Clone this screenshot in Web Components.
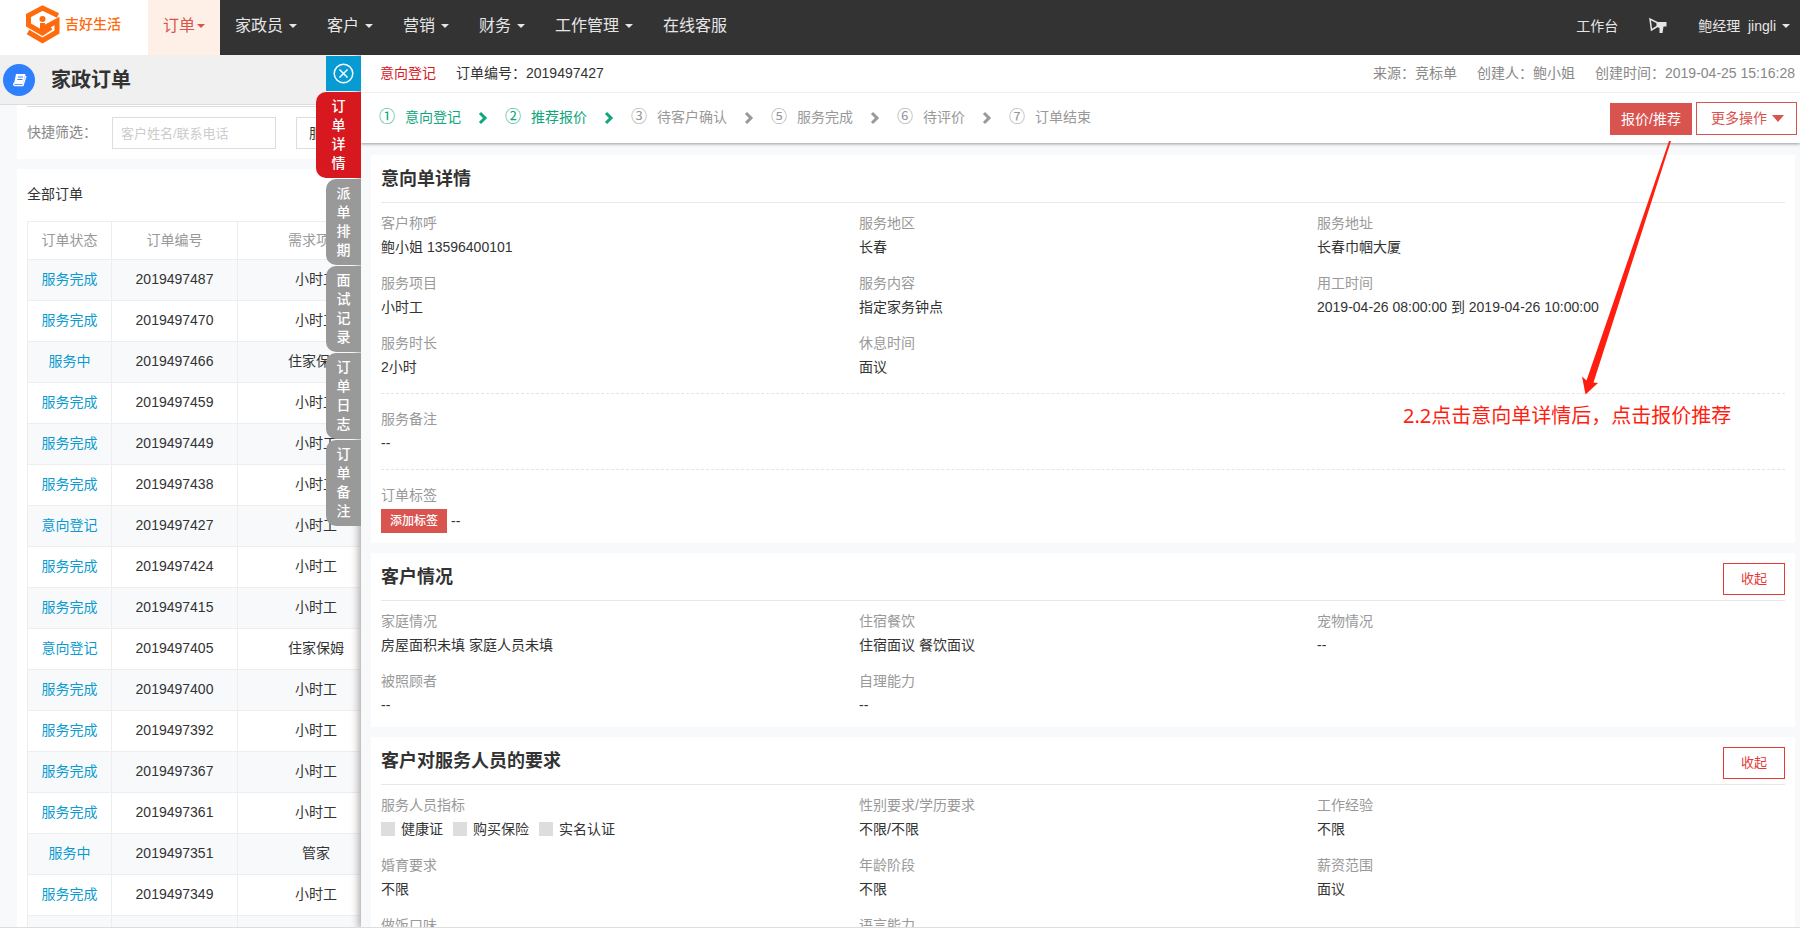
<!DOCTYPE html>
<html lang="zh-CN">
<head>
<meta charset="utf-8">
<title>家政订单</title>
<style>
html, body { margin: 0; height: 100%; }
body { font: 14px/24px "Liberation Sans", "Noto Sans CJK SC", sans-serif; color: #333; background: #fff; overflow: hidden; }
</style>
</head>
<body>
<order-app></order-app>
<script>
const define = (name, html, setup) => {
  const template = document.createElement('template');
  template.innerHTML = html;
  customElements.define(name, class extends HTMLElement {
    constructor() {
      super();
      this.attachShadow({ mode: 'open' }).append(template.content.cloneNode(true));
    }
    connectedCallback() { if (setup) setup(this, this.shadowRoot); }
  });
};

define('nav-item', `
<style>
:host { display: block; font-size: 16px; }
a { display: flex; align-items: center; gap: 6px; height: 100%; box-sizing: border-box; padding: 0 15px 4px; color: #e6e6e6; text-decoration: none; white-space: nowrap; }
i { display: none; border: 4px solid transparent; border-top-color: currentColor; border-bottom: 0; }
:host([menu]) i { display: block; }
:host([active]) a { background: #fef0e6; color: #d9534f; gap: 2px; }
:host([small]) { font-size: 14px; }
</style>
<a href="#"><slot></slot><i></i></a>`);

define('app-nav', `
<style>
:host { display: flex; height: 55px; flex: none; background: #333; }
.logo { display: flex; align-items: center; gap: 4px; width: 148px; box-sizing: border-box; padding: 0 0 6px 25px; background: #fff; color: #ff6a0d; font-weight: 500; text-decoration: none; }
nav { display: flex; }
nav.user { margin-left: auto; margin-right: -5px; }
.logo span { padding-bottom: 2px; }
</style>
<a class="logo" href="#">
<svg width="36" height="40" viewBox="0 0 36 40"><g fill="none" stroke="#ff6a0d" stroke-width="5" stroke-linejoin="miter"><path d="M33 10.5 17.5 3 3.500 10.500V20L17.500 28 26 22.500"/><path d="M3 27 17.500 35.500 32 27V16L19 23"/></g><circle cx="17.500" cy="14" r="3" fill="#ff6a0d"/><path d="M15 18h5v11h-5z" fill="#ff6a0d"/></svg>
<span>吉好生活</span></a>
<nav>
<nav-item active menu>订单</nav-item><nav-item menu>家政员</nav-item><nav-item menu>客户</nav-item><nav-item menu>营销</nav-item><nav-item menu>财务</nav-item><nav-item menu>工作管理</nav-item><nav-item>在线客服</nav-item>
</nav>
<nav class="user">
<nav-item small>工作台</nav-item>
<nav-item small><svg width="20" height="20" viewBox="0 0 20 20"><path d="M2 3 3.500 14 10 10V7z" fill="none" stroke="#e6e6e6" stroke-width="1.500"/><path d="M8.500 6H18.500V10.500H15.500L14.500 17H11.500V12L8.500 10.500z" fill="#e6e6e6"/></svg></nav-item>
<nav-item small menu>鲍经理&nbsp; jingli</nav-item>
</nav>`);

define('order-list', `
<style>
:host { display: flex; flex-direction: column; width: 361px; flex: none; overflow: hidden; background: #f7f9fb; }
header { display: flex; align-items: center; gap: 16px; height: 49px; flex: none; padding-left: 3px; background: #f0f0f0; border-bottom: 1px solid #ddd; }
.badge { display: flex; align-items: center; justify-content: center; width: 32px; height: 32px; border-radius: 50%; background: #2f80ff; }
h1 { margin: 0; font-size: 20px; line-height: 24px; }
section { width: 378px; margin-left: 17px; padding-left: 10px; background: #fff; box-sizing: border-box; flex: none; }
.filter { margin-bottom: 10px; padding-top: 1px; }
.filter div { display: flex; align-items: center; border-top: 1px solid #ddd; padding: 10px 0; }
label { width: 85px; color: #888; padding-bottom: 2px; }
input { width: 164px; height: 32px; box-sizing: border-box; margin-right: 20px; padding: 0 8px; border: 1px solid #ddd; font: inherit; font-size: 13px; color: #333; flex: none; }
input::placeholder { color: #ccc; }
.btn { height: 32px; width: 80px; flex: none; border: 1px solid #ddd; background: #fff; font: inherit; color: #333; text-align: left; padding: 0 12px; }
h2 { margin: 0; padding: 13px 0 15px; font-size: 14px; line-height: 24px; font-weight: 400; }
table { width: 368px; table-layout: fixed; border-collapse: collapse; text-align: center; }
th, td { border: 1px solid #eee; padding: 0 0 2px; height: 38px; font-weight: 400; }
th { height: 35px; color: #999; }
tbody tr:nth-child(odd) { background: #f7f9fb; }
a { color: #0a9bd0; text-decoration: none; }
.c1 { width: 84px; } .c2 { width: 126px; }
</style>
<header><span class="badge"><svg width="15" height="14" viewBox="0 0 15 14"><path d="M4 1h9.500L11 11H2z" fill="#fff"/><path d="M6 4h5M5.500 6.500h5" stroke="#2f80ff"/><path d="M2.500 9.500Q.5 12.500 3 12.500h8L14 3" fill="none" stroke="#fff" stroke-width="1.300"/></svg></span><h1>家政订单</h1></header>
<section class="filter"><div><label for="q">快捷筛选：</label><input id="q" placeholder="客户姓名/联系电话"><button class="btn">服务</button></div></section>
<section><h2>全部订单</h2>
<table><colgroup><col class="c1"><col class="c2"><col></colgroup><thead><tr><th>订单状态</th><th>订单编号</th><th>需求项目</th></tr></thead><tbody></tbody></table></section>`,
(host, root) => {
  const rows = [['服务完成', 487], ['服务完成', 470], ['服务中', 466, '住家保姆'], ['服务完成', 459], ['服务完成', 449], ['服务完成', 438], ['意向登记', 427], ['服务完成', 424], ['服务完成', 415], ['意向登记', 405, '住家保姆'], ['服务完成', 400], ['服务完成', 392], ['服务完成', 367], ['服务完成', 361], ['服务中', 351, '管家'], ['服务完成', 349]];
  root.querySelector('tbody').innerHTML = rows.map(([state, id, job = '小时工']) =>
    `<tr><td><a href="#">${state}</a></td><td>2019497${id}</td><td>${job}</td></tr>`).join('') + '<tr><td></td><td></td><td></td></tr>';
});

define('side-tab', `
<style>
:host { display: block; width: 35px; }
:host([active]) { width: 45px; }
button { display: flex; justify-content: center; width: 100%; padding: 5px 0; border: 0; border-radius: 10px 0 0 10px; background: #999; color: #fff; font: inherit; font-weight: 500; line-height: 19px; }
:host([active]) button { background: #d7181f; }
span { width: 14px; word-break: break-all; }
</style>
<button><span><slot></slot></span></button>`);

define('order-step', `
<style>
:host { display: flex; align-items: center; color: #999; white-space: nowrap; }
:host([done]) { color: #0fa67c; }
b { width: 16px; margin-right: 10px; font-size: 16px; font-weight: 400; }
svg { margin: 2px 17px 0; }
:host(:last-of-type) svg { display: none; }
</style>
<b></b><slot></slot><svg width="10" height="14" viewBox="0 0 10 14"><path d="M2 2 7 7 2 12" fill="none" stroke="currentColor" stroke-width="3"/></svg>`,
(host, root) => { root.querySelector('b').textContent = host.getAttribute('mark'); });

define('info-field', `
<style>
:host { display: block; }
div { color: #999; }
p { margin: 0; min-height: 24px; }
</style>
<div></div><p><slot></slot></p>`,
(host, root) => { root.querySelector('div').textContent = host.getAttribute('label'); });

define('info-card', `
<style>
:host { display: block; margin: 0 5px 10px 10px; padding: 0 10px 10px; background: #fff; }
header { display: flex; align-items: center; justify-content: space-between; height: 47px; border-bottom: 1px solid #e8e8e8; }
h2 { margin: 0; font-size: 18px; line-height: 26px; }
button { display: none; align-self: flex-start; width: 62px; height: 32px; margin-top: 10px; border: 1px solid #e53935; background: #fff; color: #e53935; font: inherit; font-size: 13px; padding: 0; }
:host([foldable]) button { display: block; }
.grid { display: grid; grid-template-columns: 478fr 458fr 468fr; row-gap: 12px; padding-top: 8px; }
</style>
<header><h2></h2><button>收起</button></header>
<div class="grid"><slot></slot></div>
<slot name="more"></slot>`,
(host, root) => { root.querySelector('h2').textContent = host.getAttribute('heading'); });

define('quality-check', `
<style>
:host { display: inline-block; vertical-align: top; margin-right: 10px; }
label { display: flex; align-items: center; gap: 6px; }
input { appearance: none; width: 14px; height: 14px; margin: 0; background: #ddd; }
</style>
<label><input type="checkbox" disabled><slot></slot></label>`);

define('callout-note', `
<style>
:host { display: block; position: absolute; top: 86px; right: 68px; width: 329px; pointer-events: none; color: #ff1e10; font: 20px/30px "Noto Sans", "Noto Sans CJK SC", sans-serif; white-space: nowrap; }
svg { display: block; margin: 0 0 6px 178px; }
</style>
<svg width="92" height="254" viewBox="0 0 92 254"><path d="M88 0h2L12.500 241.500 17 242 4.500 253.500 1 235.500 5.500 239.500z" fill="#ff1e10"/></svg>
<div>2.2点击意向单详情后，点击报价推荐</div>`);

define('order-drawer', `
<style>
:host { display: flex; flex-direction: column; flex: 1; min-width: 0; position: relative; background: #f7f9fb; box-shadow: 0 0 8px 2px #a8a0a0; }
.tabs { position: absolute; top: 1px; right: 100%; display: flex; flex-direction: column; align-items: flex-end; gap: 1px; }
.close { display: flex; align-items: center; justify-content: center; width: 35px; height: 35px; padding: 0; border: 0; background: #069bd2; }
.top { background: #fff; box-shadow: 0 1px 3px #999; position: relative; flex: none; }
.meta { display: flex; gap: 20px; height: 35px; align-items: center; padding: 0 5px 2px 19px; border-bottom: 1px solid #f0f0f0; white-space: nowrap; }
.meta em { font-style: normal; color: #d7181f; }
.meta span { color: #888; }
.meta .from { margin-left: auto; }
.steps { display: flex; align-items: center; height: 48px; padding: 0 3px 2px 18px; }
.ops { display: flex; align-items: flex-end; gap: 4px; margin-left: auto; padding-top: 2px; }
.ops button { height: 32px; border: 1px solid #d9534f; background: #d9534f; color: #fff; font: inherit; padding: 0 10px; white-space: nowrap; }
.ops .more { display: flex; align-items: center; gap: 5px; height: 33px; padding: 0 12px 0 14px; background: #fff; color: #d9534f; }
.more i { border: 6px solid transparent; border-top: 7px solid currentColor; border-bottom: 0; }
.body { flex: 1; min-height: 0; overflow: hidden; padding-top: 12px; }
.part { margin-top: 14px; padding-top: 13px; border-top: 1px dashed #e4e4e4; }
.tags { display: flex; align-items: center; gap: 4px; padding-top: 2px; }
.tags button { width: 66px; height: 24px; padding: 0; border: 0; background: #d9534f; color: #fff; font: inherit; font-size: 12px; font-weight: 500; }
</style>
<div class="top">
<div class="meta"><em>意向登记</em><div>订单编号：2019497427</div><span class="from">来源：竞标单</span><span>创建人：鲍小姐</span><span>创建时间：2019-04-25 15:16:28</span></div>
<div class="steps">
<order-step done mark="①">意向登记</order-step><order-step done mark="②">推荐报价</order-step><order-step mark="③">待客户确认</order-step><order-step mark="⑤">服务完成</order-step><order-step mark="⑥">待评价</order-step><order-step mark="⑦">订单结束</order-step>
<div class="ops"><button>报价/推荐</button><button class="more">更多操作<i></i></button></div>
</div>
</div>
<div class="body">
<info-card heading="意向单详情">
<info-field label="客户称呼">鲍小姐 13596400101</info-field><info-field label="服务地区">长春</info-field><info-field label="服务地址">长春巾帼大厦</info-field>
<info-field label="服务项目">小时工</info-field><info-field label="服务内容">指定家务钟点</info-field><info-field label="用工时间">2019-04-26 08:00:00 到 2019-04-26 10:00:00</info-field>
<info-field label="服务时长">2小时</info-field><info-field label="休息时间">面议</info-field>
<div class="part" slot="more"><info-field label="服务备注">--</info-field></div>
<div class="part" slot="more"><info-field label="订单标签"><div class="tags"><button>添加标签</button>--</div></info-field></div>
</info-card>
<info-card heading="客户情况" foldable>
<info-field label="家庭情况">房屋面积未填 家庭人员未填</info-field><info-field label="住宿餐饮">住宿面议 餐饮面议</info-field><info-field label="宠物情况">--</info-field>
<info-field label="被照顾者">--</info-field><info-field label="自理能力">--</info-field>
</info-card>
<info-card heading="客户对服务人员的要求" foldable>
<info-field label="服务人员指标"><quality-check>健康证</quality-check><quality-check>购买保险</quality-check><quality-check>实名认证</quality-check></info-field><info-field label="性别要求/学历要求">不限/不限</info-field><info-field label="工作经验">不限</info-field>
<info-field label="婚育要求">不限</info-field><info-field label="年龄阶段">不限</info-field><info-field label="薪资范围">面议</info-field>
<info-field label="做饭口味"></info-field><info-field label="语言能力"></info-field>
</info-card>
</div>
<div class="tabs">
<button class="close" aria-label="关闭"><svg width="21" height="21" viewBox="0 0 21 21" fill="none" stroke="#fff" stroke-width="1.500"><circle cx="10.500" cy="10.500" r="9.300"/><path d="M6.500 6.500l8 8m0-8l-8 8"/></svg></button>
<side-tab active>订单详情</side-tab><side-tab>派单排期</side-tab><side-tab>面试记录</side-tab><side-tab>订单日志</side-tab><side-tab>订单备注</side-tab>
</div>
<callout-note></callout-note>`);

define('order-app', `
<style>
:host { display: flex; flex-direction: column; height: 100vh; }
main { display: flex; flex: 1; min-height: 0; overflow: hidden; border-bottom: 1px solid #ddd; margin-bottom: 3px; }
</style>
<app-nav></app-nav>
<main><order-list></order-list><order-drawer></order-drawer></main>`);
</script>
</body>
</html>
